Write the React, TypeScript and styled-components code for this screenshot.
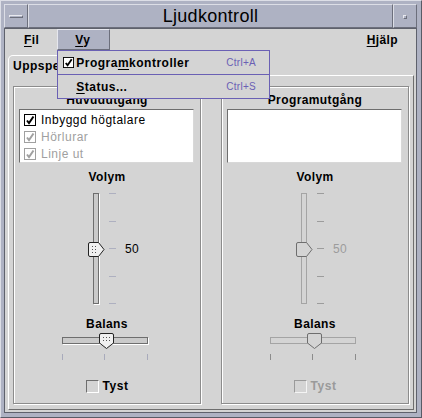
import React from 'react';
import styled, { createGlobalStyle } from 'styled-components';

const GlobalStyle = createGlobalStyle`
  html, body {
    margin: 0;
    padding: 0;
    background: #d4d4d4;
  }
  body {
    font-family: "Liberation Sans", Arial, Helvetica, sans-serif;
    font-size: 12px;
    color: #000;
  }
`;

const Window = styled.div`
  width: 422px;
  height: 418px;
  box-sizing: border-box;
  background: #aeb2c3;
  border: 1px solid;
  border-color: #dcdee6 #585b66 #585b66 #dcdee6;
  padding: 3px 4px 4px 3px;
  display: flex;
  flex-direction: column;
`;

const TitleBar = styled.div`
  height: 24px;
  display: flex;
  flex-shrink: 0;
`;

const TitleButton = styled.div`
  width: 24px;
  box-sizing: border-box;
  border: 1px solid;
  border-color: #dcdee6 #6c6f7c #6c6f7c #dcdee6;
  display: flex;
  align-items: center;
  justify-content: center;
`;

const MinBar = styled.div`
  width: 14px;
  height: 3px;
  box-sizing: border-box;
  border: 1px solid;
  border-color: #e8e9ef #6c6f7c #6c6f7c #e8e9ef;
  margin-top: 1px;
`;

const MaxDot = styled.div`
  width: 4px;
  height: 4px;
  box-sizing: border-box;
  border: 1px solid;
  border-color: #e8e9ef #6c6f7c #6c6f7c #e8e9ef;
  margin-top: 1px;
`;

const TitleText = styled.div`
  flex: 1;
  box-sizing: border-box;
  border: 1px solid;
  border-color: #dcdee6 #6c6f7c #6c6f7c #dcdee6;
  display: flex;
  align-items: center;
  justify-content: center;
  font-size: 18px;
  letter-spacing: 0.3px;
`;

const Body = styled.div`
  flex: 1;
  background: #d4d4d4;
  border: 1px solid #5e616c;
  display: flex;
  flex-direction: column;
`;

const MenuBar = styled.div`
  height: 21px;
  display: flex;
  padding-left: 1px;
  flex-shrink: 0;
`;

const MenuTitle = styled.div<{ $active?: boolean; $right?: boolean }>`
  position: relative;
  display: flex;
  align-items: center;
  padding: 0 ${p => (p.$active ? '19px' : '17px')} 0 17px;
  font-weight: bold;
  font-size: 12px;
  letter-spacing: 0.4px;
  box-sizing: border-box;
  border: 1px solid;
  border-color: ${p => (p.$active ? '#e6e7ee #6c6f7c #6c6f7c #e6e7ee' : 'transparent')};
  background: ${p => (p.$active ? '#aeb2c3' : 'transparent')};
  margin-left: ${p => (p.$right ? 'auto' : '0')};
`;

const Mn = styled.span`
  text-decoration: underline;
  text-underline-offset: 2px;
`;

const Dropdown = styled.div`
  position: absolute;
  left: -1px;
  top: calc(100% + 1px);
  width: 211px;
  background: #d4d4d4;
  border: 1px solid #6a60b4;
  z-index: 10;
  display: flex;
  flex-direction: column;
`;

const DropItem = styled.div<{ $sep?: boolean }>`
  height: 23px;
  display: flex;
  align-items: center;
  padding-left: 5px;
  border-top: ${p => (p.$sep ? '1px solid #6a60b4' : 'none')};
  font-weight: bold;
  letter-spacing: 0.5px;
`;

const DropLabel = styled.span<{ $indent?: boolean }>`
  flex: 1;
  margin-left: ${p => (p.$indent ? '13px' : '2px')};
`;

const Accel = styled.span`
  width: 43px;
  font-weight: normal;
  font-size: 10px;
  color: #6a60b4;
  letter-spacing: 0.3px;
`;

const TabArea = styled.div`
  flex: 1;
  display: flex;
  flex-direction: column;
  padding: 5px 2px 2px 3px;
`;

const TabStrip = styled.div`
  height: 20px;
  display: flex;
  flex-shrink: 0;
`;

const Tab = styled.div`
  box-sizing: border-box;
  height: 21px;
  padding: 0 6px 0 4px;
  display: flex;
  align-items: center;
  font-weight: bold;
  letter-spacing: 0.5px;
  border: 1px solid;
  border-bottom: none;
  border-color: #fff #6e6e6e transparent #fff;
  border-top-left-radius: 5px;
  background: #d4d4d4;
  position: relative;
  z-index: 1;
`;

const Panel = styled.div`
  flex: 1;
  box-sizing: border-box;
  border: 1px solid;
  border-color: #fff #6e6e6e #6e6e6e #fff;
  padding: 10px 4px 5px 4px;
  display: grid;
  grid-template-columns: 1fr 1fr;
  column-gap: 20px;
`;

const Group = styled.div`
  border: 1px solid #8c8c8c;
  box-shadow: inset 1px 1px 0 #fff, 1px 1px 0 #fff;
  display: flex;
  flex-direction: column;
  align-items: center;
`;

const Label = styled.div<{ $top: number; $dim?: boolean }>`
  margin-top: ${p => p.$top}px;
  line-height: 14px;
  font-weight: bold;
  letter-spacing: 0.4px;
  color: ${p => (p.$dim ? '#9a9a9a' : '#000')};
`;

const ListBox = styled.div`
  align-self: stretch;
  margin: 2px 6px 0 5px;
  height: 54px;
  box-sizing: border-box;
  background: #fff;
  border: 1px solid;
  border-color: #6e6e6e #d8d8d8 #d8d8d8 #6e6e6e;
  padding: 1px 0 0 4px;
`;

const ListRow = styled.div<{ $dim?: boolean }>`
  height: 17px;
  display: flex;
  align-items: center;
  gap: 5px;
  letter-spacing: 0.5px;
  color: ${p => (p.$dim ? '#a0a0a0' : '#000')};
`;

const VSliderRow = styled.div`
  align-self: flex-start;
  margin: 9px 0 0 74px;
  height: 111px;
  display: flex;
  align-items: center;
`;

const VTrackWrap = styled.div`
  position: relative;
  width: 17px;
  height: 100%;
  display: flex;
  justify-content: center;
`;

const VTrack = styled.div<{ $dim?: boolean }>`
  width: 6px;
  box-sizing: border-box;
  height: 100%;
  border: 1px solid ${p => (p.$dim ? '#a4a4a4' : '#6e6e6e')};
  box-shadow: ${p => (p.$dim ? 'none' : '1px 1px 0 #fff')};
  background: ${p => (p.$dim ? '#d4d4d4' : '#cacaca')};
  margin-left: -2px;
`;

const VThumb = styled.svg`
  position: absolute;
  left: 0;
  top: 49px;
`;

const VTicks = styled.div`
  height: 100%;
  margin-left: 4px;
  display: flex;
  flex-direction: column;
  justify-content: space-between;
`;

const VTick = styled.div<{ $dim?: boolean }>`
  width: 7px;
  height: 1px;
  background: ${p => (p.$dim ? '#9c9c9c' : '#aeb0c0')};
`;

const Value = styled.div<{ $dim?: boolean }>`
  margin-left: 9px;
  letter-spacing: 0.3px;
  color: ${p => (p.$dim ? '#9c9c9c' : '#000')};
`;

const HSlider = styled.div`
  position: relative;
  width: 86px;
  height: 27px;
  margin: 2px 5px 0 0;
  display: flex;
  flex-direction: column;
`;

const HTrack = styled.div<{ $dim?: boolean }>`
  margin-top: 4px;
  height: 7px;
  box-sizing: border-box;
  border: 1px solid ${p => (p.$dim ? '#a4a4a4' : '#6e6e6e')};
  box-shadow: ${p => (p.$dim ? 'none' : '1px 1px 0 #fff')};
  background: ${p => (p.$dim ? '#d4d4d4' : '#cacaca')};
`;

const HThumb = styled.svg`
  position: absolute;
  left: 37px;
  top: 0;
`;

const HTicks = styled.div`
  margin-top: 10px;
  height: 6px;
  display: flex;
  justify-content: space-between;
`;

const HTick = styled.div<{ $dim?: boolean }>`
  width: 1px;
  height: 100%;
  background: ${p => (p.$dim ? '#8c8c8c' : '#a8aabb')};
`;

const MuteRow = styled.div<{ $dim?: boolean }>`
  margin-top: 19px;
  display: flex;
  align-items: center;
  gap: 4px;
  font-weight: bold;
  letter-spacing: 0.5px;
  color: ${p => (p.$dim ? '#9a9a9a' : '#000')};
`;

const MuteBox = styled.div<{ $dim?: boolean }>`
  width: 13px;
  height: 13px;
  box-sizing: border-box;
  border: 1px solid;
  border-color: ${p =>
    p.$dim ? '#9a9a9a #f4f4f4 #f4f4f4 #9a9a9a' : '#6e6e6e #fff #fff #6e6e6e'};
  background: #d4d4d4;
`;

function CheckIcon({ color, size = 12 }: { color: string; size?: number }) {
  return (
    <svg width={size} height={size} viewBox="0 0 12 12">
      <rect x="0.5" y="0.5" width="11" height="11" fill="#fff" stroke={color} />
      <path d="M3 6.5 L5 9 L9.5 2.5" fill="none" stroke={color} strokeWidth="2" />
    </svg>
  );
}

function VerticalThumb({ dim }: { dim?: boolean }) {
  return (
    <VThumb width="17" height="15" viewBox="0 0 17 15">
      <defs>
        <pattern id="dotsV" width="3" height="3" patternUnits="userSpaceOnUse">
          <rect x="1" y="1" width="1" height="1" fill="#555" />
        </pattern>
      </defs>
      <path
        d="M2 0.5 H10.5 L16 7.5 L10.5 14.5 H2 Q0.5 14.5 0.5 13 V2 Q0.5 0.5 2 0.5 Z"
        fill={dim ? '#d4d4d4' : '#f0f0f0'}
        stroke={dim ? '#6e6e6e' : '#222'}
      />
      {!dim && <rect x="3" y="3" width="7" height="9" fill="url(#dotsV)" />}
    </VThumb>
  );
}

function HorizontalThumb({ dim }: { dim?: boolean }) {
  return (
    <HThumb width="15" height="16" viewBox="0 0 15 16">
      <defs>
        <pattern id="dotsH" width="3" height="3" patternUnits="userSpaceOnUse">
          <rect x="1" y="1" width="1" height="1" fill="#555" />
        </pattern>
      </defs>
      <path
        d="M2 0.5 H13 Q14.5 0.5 14.5 2 V10 L7.5 15.5 L0.5 10 V2 Q0.5 0.5 2 0.5 Z"
        fill={dim ? '#d4d4d4' : '#f0f0f0'}
        stroke={dim ? '#6e6e6e' : '#222'}
      />
      {!dim && <rect x="3" y="3" width="9" height="6" fill="url(#dotsH)" />}
    </HThumb>
  );
}

type OutputProps = {
  title: string;
  dim?: boolean;
  devices: { name: string; dim: boolean }[];
};

function Output({ title, dim, devices }: OutputProps) {
  const ticks = [0, 1, 2, 3, 4];
  return (
    <Group>
      <Label $top={6}>{title}</Label>
      <ListBox>
        {devices.map(d => (
          <ListRow key={d.name} $dim={d.dim}>
            <CheckIcon color={d.dim ? '#a0a0a0' : '#000'} />
            {d.name}
          </ListRow>
        ))}
      </ListBox>
      <Label $top={7}>Volym</Label>
      <VSliderRow>
        <VTrackWrap>
          <VTrack $dim={dim} />
          <VerticalThumb dim={dim} />
        </VTrackWrap>
        <VTicks>
          {ticks.map(t => (
            <VTick key={t} $dim={dim} />
          ))}
        </VTicks>
        <Value $dim={dim}>50</Value>
      </VSliderRow>
      <Label $top={13}>Balans</Label>
      <HSlider>
        <HTrack $dim={dim} />
        <HorizontalThumb dim={dim} />
        <HTicks>
          <HTick $dim={dim} />
          <HTick $dim={dim} />
          <HTick $dim={dim} />
        </HTicks>
      </HSlider>
      <MuteRow $dim={dim}>
        <MuteBox $dim={dim} />
        Tyst
      </MuteRow>
    </Group>
  );
}

export default function App() {
  return (
    <>
      <GlobalStyle />
      <Window>
        <TitleBar>
          <TitleButton>
            <MinBar />
          </TitleButton>
          <TitleText>Ljudkontroll</TitleText>
          <TitleButton>
            <MaxDot />
          </TitleButton>
        </TitleBar>
        <Body>
          <MenuBar>
            <MenuTitle>
              <span>
                <Mn>F</Mn>il
              </span>
            </MenuTitle>
            <MenuTitle $active>
              <span>
                <Mn>V</Mn>y
              </span>
              <Dropdown>
                <DropItem>
                  <CheckIcon color="#000" size={11} />
                  <DropLabel>
                    Progra<Mn>m</Mn>kontroller
                  </DropLabel>
                  <Accel>Ctrl+A</Accel>
                </DropItem>
                <DropItem $sep>
                  <DropLabel $indent>
                    <Mn>S</Mn>tatus...
                  </DropLabel>
                  <Accel>Ctrl+S</Accel>
                </DropItem>
              </Dropdown>
            </MenuTitle>
            <MenuTitle $right>
              <span>
                <Mn>H</Mn>jälp
              </span>
            </MenuTitle>
          </MenuBar>
          <TabArea>
            <TabStrip>
              <Tab>Uppspelning</Tab>
            </TabStrip>
            <Panel>
              <Output
                title="Huvudutgång"
                devices={[
                  { name: 'Inbyggd högtalare', dim: false },
                  { name: 'Hörlurar', dim: true },
                  { name: 'Linje ut', dim: true },
                ]}
              />
              <Output title="Programutgång" dim devices={[]} />
            </Panel>
          </TabArea>
        </Body>
      </Window>
    </>
  );
}
